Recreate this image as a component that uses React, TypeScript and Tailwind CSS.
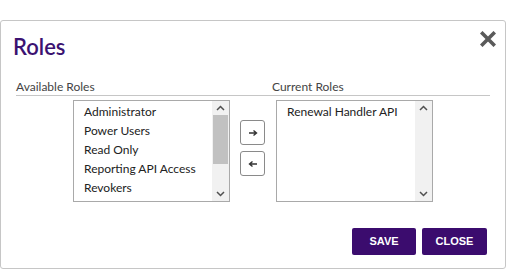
import React from "react";

const Up = () => (
  <svg width="9" height="6" viewBox="0 0 9 6"><path d="M1 5 L4.5 1.5 L8 5" fill="none" stroke="#505050" strokeWidth="1.5" /></svg>
);
const Down = () => (
  <svg width="9" height="6" viewBox="0 0 9 6"><path d="M1 1 L4.5 4.5 L8 1" fill="none" stroke="#505050" strokeWidth="1.5" /></svg>
);

function ListBox({ items, thumb }: { items: string[]; thumb: boolean }) {
  return (
    <div className="flex h-[102px] w-[157px] border border-[#a9a9a9] bg-white">
      <div className="flex-1 overflow-hidden pl-[10px] pt-[1px]">
        {items.map((t) => (
          <div key={t} className="h-[19px] text-[12px] leading-[19px] text-[#222]">
            {t}
          </div>
        ))}
      </div>
      <div className="flex w-[17px] flex-col bg-[#f1f1f1]">
        <div className="flex h-[14px] items-center justify-center"><Up /></div>
        <div className="flex-1">
          {thumb && <div className="mx-[1px] h-[49px] bg-[#c1c1c1]" />}
        </div>
        <div className="flex h-[14px] items-center justify-center"><Down /></div>
      </div>
    </div>
  );
}

export default function App() {
  return (
    <div className="h-[270px] w-[507px] bg-white pt-[20px]" style={{ fontFamily: "Lato, 'Liberation Sans', sans-serif" }}>
      <div className="relative h-[249px] w-[506px] rounded-[3px] border border-[#c6c6c6]">
        <div className="flex items-start justify-between pl-[12px] pr-[9px] pt-[12px]">
          <h1 className="text-[22px] font-semibold leading-[28px] text-[#3b1271]">Roles</h1>
          <svg width="16" height="16" viewBox="0 0 16 16" className="mt-[-2px]">
            <path d="M2.5 2.5 L13.5 13.5 M13.5 2.5 L2.5 13.5" stroke="#5a5a5a" strokeWidth="3.6" strokeLinecap="square" />
          </svg>
        </div>
        <div className="mx-[15px] mt-[19px] flex border-b border-[#c6c6c6] pb-[2px] text-[12px] leading-[13px] text-[#444]">
          <div className="w-[256px]">Available Roles</div>
          <div>Current Roles</div>
        </div>
        <div className="mt-[4px] flex items-start pl-[72px]">
          <ListBox
            items={["Administrator", "Power Users", "Read Only", "Reporting API Access", "Revokers"]}
            thumb
          />
          <div className="ml-[10px] mr-[11px] mt-[20px] flex flex-col gap-[6px]">
            <button className="flex h-[25px] w-[25px] items-center justify-center rounded-[3px] border border-[#8a8a8a] bg-white">
              <svg width="10" height="8" viewBox="0 0 10 8"><path d="M1 4 H8 M5.5 1.5 L8.5 4 L5.5 6.5" fill="none" stroke="#333" strokeWidth="1.4" /></svg>
            </button>
            <button className="flex h-[25px] w-[25px] items-center justify-center rounded-[3px] border border-[#8a8a8a] bg-white">
              <svg width="10" height="8" viewBox="0 0 10 8"><path d="M9 4 H2 M4.5 1.5 L1.5 4 L4.5 6.5" fill="none" stroke="#333" strokeWidth="1.4" /></svg>
            </button>
          </div>
          <ListBox items={["Renewal Handler API"]} thumb={false} />
        </div>
        <div className="mt-[26px] flex justify-end gap-[6px] pr-[18px]">
          <button className="h-[27px] w-[64px] rounded-[2px] bg-[#3b0c6e] text-[11px] font-bold text-white" style={{ fontFamily: "'Liberation Sans', Arial, sans-serif" }}>SAVE</button>
          <button className="h-[27px] w-[65px] rounded-[2px] bg-[#3b0c6e] text-[11px] font-bold text-white" style={{ fontFamily: "'Liberation Sans', Arial, sans-serif" }}>CLOSE</button>
        </div>
      </div>
    </div>
  );
}
